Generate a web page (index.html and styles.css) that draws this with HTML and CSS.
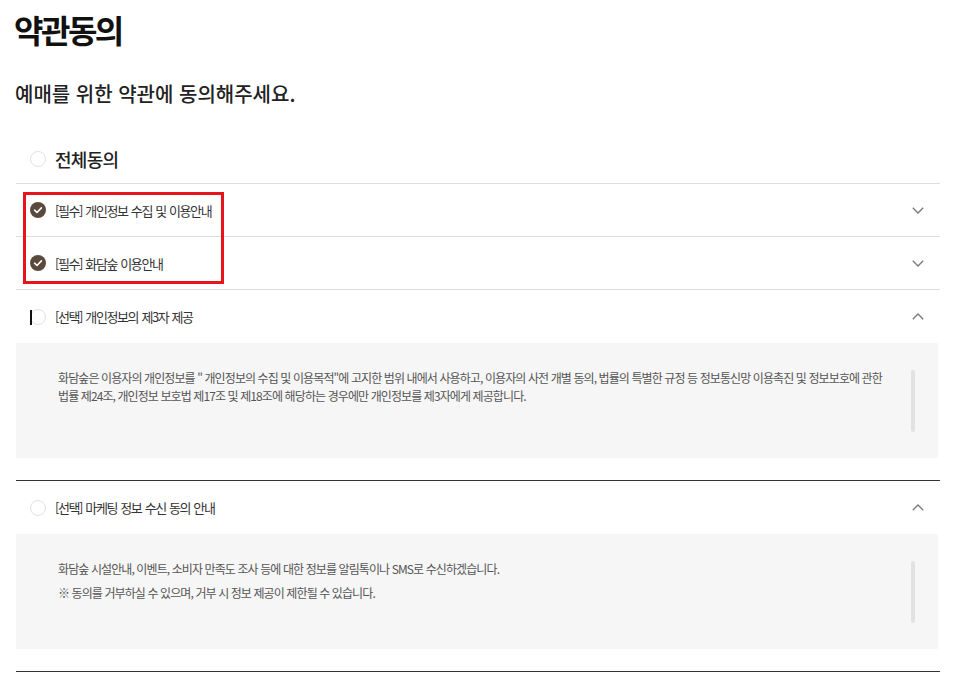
FILE: index.html
```html
<!DOCTYPE html>
<html lang="ko">
<head>
<meta charset="utf-8">
<title>약관동의</title>
<link rel="stylesheet" href="styles.css">
</head>
<body>
<div class="page">
  <h1 class="title">약관동의</h1>
  <p class="subtitle">예매를 위한 약관에 동의해주세요.</p>

  <div class="all-row">
    <span class="radio"></span>
    <span class="all-label">전체동의</span>
  </div>

  <div class="term">
    <div class="term-head">
      <svg class="check" width="16" height="16" viewBox="0 0 16 16"><circle cx="8" cy="8" r="8" fill="#5a4a3d"/><path d="M4.6 8.2 L7 10.5 L11.4 5.9" fill="none" stroke="#fff" stroke-width="1.6" stroke-linecap="round" stroke-linejoin="round"/></svg>
      <span class="label">[필수] 개인정보 수집 및 이용안내</span>
      <svg class="chev" width="12" height="7" viewBox="0 0 12 7"><polyline points="0.8,0.8 6,6 11.2,0.8" fill="none" stroke="#777" stroke-width="1.3"/></svg>
    </div>
  </div>

  <div class="term">
    <div class="term-head">
      <svg class="check" width="16" height="16" viewBox="0 0 16 16"><circle cx="8" cy="8" r="8" fill="#5a4a3d"/><path d="M4.6 8.2 L7 10.5 L11.4 5.9" fill="none" stroke="#fff" stroke-width="1.6" stroke-linecap="round" stroke-linejoin="round"/></svg>
      <span class="label">[필수] 화담숲 이용안내</span>
      <svg class="chev" width="12" height="7" viewBox="0 0 12 7"><polyline points="0.8,0.8 6,6 11.2,0.8" fill="none" stroke="#777" stroke-width="1.3"/></svg>
    </div>
  </div>

  <div class="term open">
    <div class="term-head">
      <span class="radio small"><span class="caret"></span></span>
      <span class="label">[선택] 개인정보의 제3자 제공</span>
      <svg class="chev" width="12" height="7" viewBox="0 0 12 7"><polyline points="0.8,6.2 6,1 11.2,6.2" fill="none" stroke="#777" stroke-width="1.3"/></svg>
    </div>
    <div class="term-body">
      <div class="body-text">
        <p>화담숲은 이용자의 개인정보를 " 개인정보의 수집 및 이용목적"에 고지한 범위 내에서 사용하고, 이용자의 사전 개별 동의, 법률의 특별한 규정 등 정보통신망 이용촉진 및 정보보호에 관한 법률 제24조, 개인정보 보호법 제17조 및 제18조에 해당하는 경우에만 개인정보를 제3자에게 제공합니다.</p>
      </div>
      <div class="thumb"></div>
    </div>
  </div>

  <div class="term open">
    <div class="term-head">
      <span class="radio small"></span>
      <span class="label">[선택] 마케팅 정보 수신 동의 안내</span>
      <svg class="chev" width="12" height="7" viewBox="0 0 12 7"><polyline points="0.8,6.2 6,1 11.2,6.2" fill="none" stroke="#777" stroke-width="1.3"/></svg>
    </div>
    <div class="term-body">
      <div class="body-text">
        <p>화담숲 시설안내, 이벤트, 소비자 만족도 조사 등에 대한 정보를 알림톡이나 SMS로 수신하겠습니다.</p>
        <p>※ 동의를 거부하실 수 있으며, 거부 시 정보 제공이 제한될 수 있습니다.</p>
      </div>
      <div class="thumb"></div>
    </div>
  </div>

  <div class="highlight"></div>
</div>
</body>
</html>
```

FILE: styles.css
```css
html, body {
  margin: 0;
  padding: 0;
  background: #fff;
}
body {
  font-family: "Noto Sans CJK KR", "Noto Sans", sans-serif;
  color: #222;
}
.page {
  position: relative;
  width: 924px;
  padding: 0 14px 0 16px;
}
.title {
  margin: 0 0 0 -2px;
  padding-top: 9px;
  font-size: 32px;
  line-height: 40px;
  font-weight: 700;
  letter-spacing: -2.5px;
  color: #111;
}
.subtitle {
  margin: 31px 0 0 -1px;
  font-size: 20px;
  line-height: 28px;
  font-weight: 500;
  letter-spacing: 0;
  color: #222;
}
.all-row {
  display: flex;
  align-items: center;
  height: 48px;
  margin-top: 27px;
  padding-left: 14px;
  border-bottom: 1px solid #ddd;
}
.radio {
  position: relative;
  box-sizing: border-box;
  width: 16px;
  height: 16px;
  border: 1px solid #e2e2e2;
  border-radius: 50%;
  background: #fff;
  flex: none;
}
.all-label {
  margin-left: 9px;
  font-size: 18px;
  font-weight: 500;
  letter-spacing: -0.7px;
  color: #222;
}
.term {
  border-bottom: 1px solid #ddd;
}
.term.open {
  border-bottom: 1px solid #333;
  padding-bottom: 22px;
}
.term-head {
  display: flex;
  align-items: center;
  height: 52px;
  padding: 0 16px 0 14px;
}
.term.open .term-head {
  height: 53px;
}
.check {
  flex: none;
}
.caret {
  position: absolute;
  left: -1px;
  top: 0;
  width: 1.5px;
  height: 15px;
  background: #111;
}
.label {
  margin-left: 9px;
  font-size: 13px;
  letter-spacing: -1.4px;
  word-spacing: 1px;
  color: #333;
  flex: 1;
}
.chev {
  flex: none;
}
.term-body {
  display: flex;
  height: 115px;
  margin-right: 2px;
  background: #f6f6f6;
}
.body-text {
  flex: 1;
  padding: 26px 20px 0 42px;
  font-size: 12px;
  line-height: 18px;
  letter-spacing: -0.9px;
  color: #555;
}
.body-text p {
  margin: 0 0 6px;
}
.thumb {
  flex: none;
  width: 4px;
  height: 62px;
  margin: 27px 23px 0 0;
  border-radius: 2px;
  background: #e2e2e2;
}
.highlight {
  position: absolute;
  left: 23px;
  top: 192px;
  width: 201px;
  height: 92px;
  box-sizing: border-box;
  border: 3px solid #e8141b;
}
```
